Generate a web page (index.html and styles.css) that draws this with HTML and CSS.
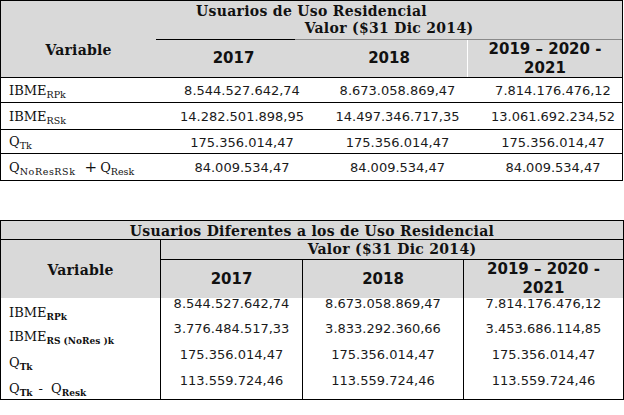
FILE: index.html
```html
<!DOCTYPE html>
<html lang="es">
<head>
<meta charset="utf-8">
<title>Usuarios</title>
<link rel="stylesheet" href="styles.css">
</head>
<body>
<section class="t1">
  <div class="t1-head">
    <div class="title">Usuarios de Uso Residencial</div>
    <div class="hgrid">
      <div class="var">Variable</div>
      <div class="valor">Valor ($31 Dic 2014)</div>
      <div class="yr">2017</div>
      <div class="yr">2018</div>
      <div class="yr yr-split">2019 – 2020 -<br>2021</div>
    </div>
  </div>
  <div class="row r1">
    <div class="lbl">IBME<sub>RPk</sub></div>
    <div class="num">8.544.527.642,74</div>
    <div class="num">8.673.058.869,47</div>
    <div class="num">7.814.176.476,12</div>
  </div>
  <div class="row r2">
    <div class="lbl">IBME<sub>RSk</sub></div>
    <div class="num">14.282.501.898,95</div>
    <div class="num">14.497.346.717,35</div>
    <div class="num">13.061.692.234,52</div>
  </div>
  <div class="row r3">
    <div class="lbl">Q<sub>Tk</sub></div>
    <div class="num">175.356.014,47</div>
    <div class="num">175.356.014,47</div>
    <div class="num">175.356.014,47</div>
  </div>
  <div class="row r4">
    <div class="lbl">Q<sub class="wide">NoResRSk</sub><span class="op">+</span>Q<sub>Resk</sub></div>
    <div class="num">84.009.534,47</div>
    <div class="num">84.009.534,47</div>
    <div class="num">84.009.534,47</div>
  </div>
</section>

<section class="t2">
  <div class="t2-title">Usuarios Diferentes a los de Uso Residencial</div>
  <div class="t2-grid">
    <div class="var2">Variable</div>
    <div class="valor2">Valor ($31 Dic 2014)</div>
    <div class="yr2 c2">2017</div>
    <div class="yr2 c3">2018</div>
    <div class="yr2 c4">2019 – 2020 -<br>2021</div>

    <div class="lbl2 b1">IBME<sub class="bold">RPk</sub></div>
    <div class="num2 c2 b1">8.544.527.642,74</div>
    <div class="num2 c3 b1">8.673.058.869,47</div>
    <div class="num2 c4 b1">7.814.176.476,12</div>

    <div class="lbl2 b2">IBME<sub class="bold">RS (NoRes )k</sub></div>
    <div class="num2 c2 b2">3.776.484.517,33</div>
    <div class="num2 c3 b2">3.833.292.360,66</div>
    <div class="num2 c4 b2">3.453.686.114,85</div>

    <div class="lbl2 b3">Q<sub class="bold">Tk</sub></div>
    <div class="num2 c2 b3">175.356.014,47</div>
    <div class="num2 c3 b3">175.356.014,47</div>
    <div class="num2 c4 b3">175.356.014,47</div>

    <div class="lbl2 b4">Q<sub class="bold">Tk</sub><span class="op2">-</span>Q<sub class="bold">Resk</sub></div>
    <div class="num2 c2 b4">113.559.724,46</div>
    <div class="num2 c3 b4">113.559.724,46</div>
    <div class="num2 c4 b4">113.559.724,46</div>
  </div>
</section>
</body>
</html>
```

FILE: styles.css
```css
* { box-sizing: border-box; }
html, body { margin: 0; padding: 0; background: #fff; }
body { width: 624px; height: 415px; overflow: hidden; color: #111; }

/* ---------- Table 1 ---------- */
.t1 {
  width: 623px;
  border: 1px solid #000;
  border-bottom: none;
}
.t1-head { background: #d9d9d9; border-bottom: 1px solid #000; }
.title, .t2-title, .valor, .valor2, .var, .var2 {
  font-family: "DejaVu Serif", serif;
  font-weight: bold;
  font-size: 14px;
  letter-spacing: 0.3px;
  text-align: center;
  color: #111;
}
.title { height: 19px; line-height: 21px; }
.hgrid {
  display: grid;
  grid-template-columns: 155px 155px 156px 155px;
  grid-template-rows: 20px 37px;
}
.var {
  grid-row: 1 / 3;
  grid-column: 1;
  letter-spacing: 0.2px;
  display: flex; align-items: center; justify-content: center;
  padding-top: 2px;
}
.valor {
  grid-column: 2 / 5;
  line-height: 17px;
  border-bottom: 1px solid #000;
  border-image: linear-gradient(to right, #000 0 30%, #8a8a8a 30% 100%) 1;
}
.yr, .yr2 {
  font-family: "DejaVu Sans", sans-serif;
  font-weight: bold;
  font-size: 15px;
  line-height: 19px;
  text-align: center;
  display: flex; align-items: center; justify-content: center;
  color: #111;
}
.yr-split { border-left: 1px solid #fff; }

.row {
  display: grid;
  grid-template-columns: 155px 155px 156px 155px;
  border-bottom: 1px solid #000;
  align-items: center;
}
.r1 { height: 25px; }
.r2 { height: 27px; }
.r3 { height: 24px; }
.r4 { height: 27px; }

.lbl, .lbl2 {
  font-family: "DejaVu Serif", serif;
  font-size: 13px;
  padding-left: 8px;
  white-space: nowrap;
  color: #111;
}
.lbl sub, .lbl2 sub {
  font-size: 9.5px;
  vertical-align: -3px;
  line-height: 0;
}
.lbl2 sub.bold { font-weight: bold; font-size: 9px; }
sub.wide { letter-spacing: 0.6px; }
.op { display: inline-block; margin: 0 3px 0 9px; font-size: 15px; }
.op2 { display: inline-block; margin: 0 8px 0 6px; }

.num, .num2 {
  font-family: "DejaVu Sans", sans-serif;
  font-size: 13px;
  text-align: center;
  color: #1a1a1a;
  white-space: nowrap;
}
.num { padding-left: 17px; padding-top: 1px; }

/* ---------- Table 2 ---------- */
.t2 {
  margin-top: 39px;
  width: 624px;
  border: 1px solid #000;
}
.t2-title {
  background: #d9d9d9;
  height: 19px;
  line-height: 20px;
  border-bottom: 1px solid #000;
}
.t2-grid {
  display: grid;
  grid-template-columns: 159px 142px 161px 160px;
  grid-template-rows: 20px 38px 25px 26px 26px 24px;
}
.var2 {
  grid-row: 1 / 3; grid-column: 1;
  letter-spacing: 0.2px;
  background: #d9d9d9;
  display: flex; align-items: center; justify-content: center;
  padding-top: 2px;
}
.valor2 {
  grid-row: 1; grid-column: 2 / 5;
  background: #d9d9d9;
  border-left: 1px solid #000;
  border-bottom: 1px solid #000;
  line-height: 18px;
}
.yr2 { grid-row: 2; background: #d9d9d9; border-left: 1px solid #000; }
.c2 { grid-column: 2; }
.c3 { grid-column: 3; }
.c4 { grid-column: 4; }
.b1 { grid-row: 3; }
.b2 { grid-row: 4; }
.b3 { grid-row: 5; }
.b4 { grid-row: 6; }
.num2 { border-left: 1px solid #000; line-height: 12px; }
.lbl2 { grid-column: 1; line-height: 16px; padding-top: 6px; }
.lbl2.b1 { padding-top: 7px; }
.lbl2.b2 { padding-top: 6px; }
```
